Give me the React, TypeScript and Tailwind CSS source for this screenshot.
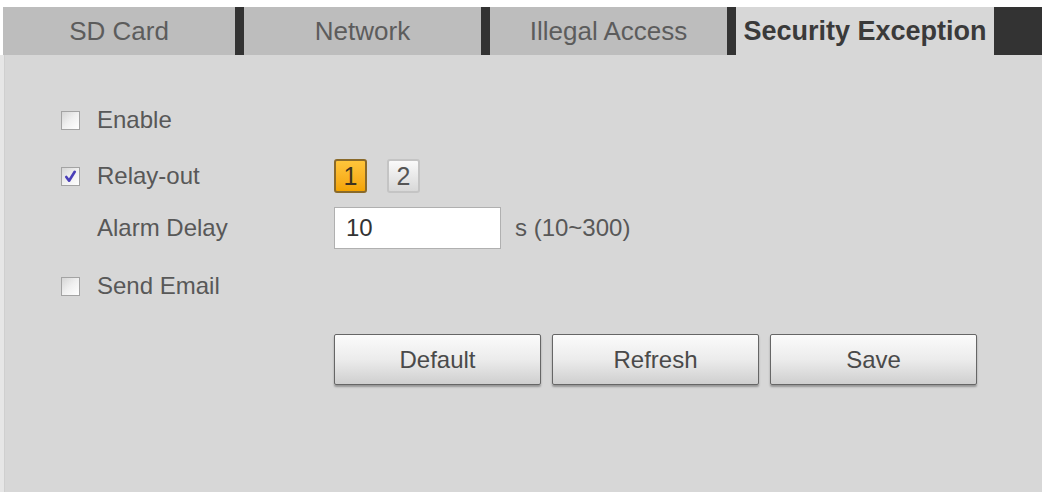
import { useState } from 'react';

const tabs = ['SD Card', 'Network', 'Illegal Access', 'Security Exception'];

const CheckBox = ({ checked }: { checked: boolean }) => (
  <span className="flex h-[19px] w-[19px] items-center justify-center border border-[#a3a3a3] bg-gradient-to-br from-[#d6d6d6] via-[#f0f0f0] to-[#ffffff]">
    {checked && (
      <svg viewBox="0 0 16 16" className="h-[15px] w-[15px]">
        <path d="M3.5 8.5 L6.5 12.5 L12.5 3" fill="none" stroke="#4a3fb8" strokeWidth="2.8" strokeLinecap="round" strokeLinejoin="round" />
      </svg>
    )}
  </span>
);

const ActionButton = ({ label }: { label: string }) => (
  <button className="h-[51px] w-[207px] rounded-[2px] border border-[#666666] bg-gradient-to-b from-[#fbfbfb] via-[#ececec] to-[#cfcfcf] text-[24px] text-[#4a4a4a] shadow-[0_2px_2px_rgba(0,0,0,0.3)]">
    {label}
  </button>
);

export default function App() {
  const [relay, setRelay] = useState(1);
  const [delay, setDelay] = useState('10');

  return (
    <div className="flex h-[492px] w-[1042px] flex-col bg-white font-['Liberation_Sans',Arial,sans-serif]">
      <div className="h-[7px] bg-white" />

      {/* tab strip */}
      <div className="flex h-[48px] pl-[3px]">
        {tabs.map((t, i) => {
          const active = i === tabs.length - 1;
          return (
            <div key={t} className="flex">
              {i > 0 && <div className="w-[9px] bg-[#333333]" />}
              <div
                className={
                  active
                    ? 'flex w-[258px] items-center justify-center bg-[#d7d7d7] text-[27px] font-bold text-[#3a3a3a]'
                    : i === 0
                      ? 'flex w-[232px] items-center justify-center bg-[#bdbdbd] text-[26px] text-[#5c5c5c]'
                      : 'flex w-[237px] items-center justify-center bg-[#bdbdbd] text-[26px] text-[#5c5c5c]'
                }
              >
                {t}
              </div>
            </div>
          );
        })}
        <div className="flex-1 bg-[#333333]" />
      </div>

      {/* content */}
      <div className="flex flex-1 bg-[#e6e6e6] pl-[4px]">
        <div className="flex-1 border-l border-[#cfcfcf] bg-[#d7d7d7] pl-[56px] pt-[44px] text-[24px] text-[#585858]">
          <div className="flex h-[42px] items-center gap-[17px]">
            <CheckBox checked={false} />
            <span>Enable</span>
          </div>

          <div className="mt-[14px] flex h-[42px] items-center">
            <div className="flex w-[273px] items-center gap-[17px]">
              <CheckBox checked />
              <span>Relay-out</span>
            </div>
            <div className="flex gap-[20px]">
              {[1, 2].map((n) => (
                <button
                  key={n}
                  onClick={() => setRelay(n)}
                  className={
                    relay === n
                      ? 'flex h-[34px] w-[33px] items-center justify-center rounded-[3px] border-2 border-[#8a6a2a] bg-gradient-to-b from-[#ffc53a] to-[#f4a400] text-[25px] leading-none text-[#3d3320]'
                      : 'flex h-[34px] w-[33px] items-center justify-center rounded-[3px] border-2 border-[#c4c4c4] bg-gradient-to-b from-[#fafafa] to-[#d8d8d8] text-[25px] leading-none text-[#555555]'
                  }
                >
                  {n}
                </button>
              ))}
            </div>
          </div>

          <div className="mt-[10px] flex h-[42px] items-center">
            <span className="w-[273px] pl-[36px]">Alarm Delay</span>
            <input
              value={delay}
              onChange={(e) => setDelay(e.target.value)}
              className="h-[42px] w-[167px] border border-[#b0b0b0] bg-white px-[11px] text-[24px] text-[#333333] outline-none"
            />
            <span className="ml-[14px]">s (10~300)</span>
          </div>

          <div className="mt-[16px] flex h-[42px] items-center gap-[17px]">
            <CheckBox checked={false} />
            <span>Send Email</span>
          </div>

          <div className="mt-[27px] flex gap-[11px] pl-[273px]">
            <ActionButton label="Default" />
            <ActionButton label="Refresh" />
            <ActionButton label="Save" />
          </div>
        </div>
      </div>
    </div>
  );
}
